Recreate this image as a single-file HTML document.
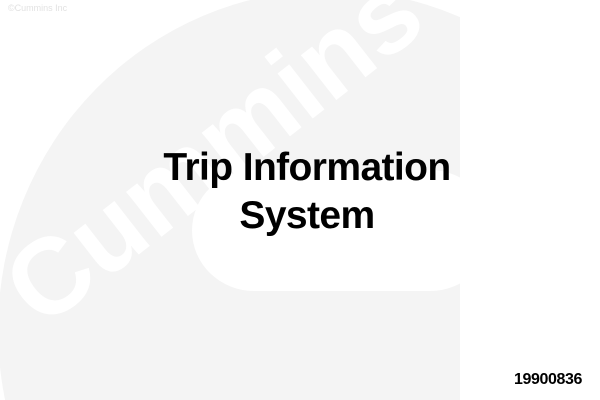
<!DOCTYPE html>
<html><head><style>
html,body{margin:0;width:600px;height:400px;overflow:hidden}
body{background:#fff;position:relative;font-family:"Liberation Sans",sans-serif}
.t{position:absolute;left:0;width:600px;text-align:center;font-weight:bold;font-size:39px;color:#000;letter-spacing:-0.6px;padding-left:14px;box-sizing:border-box;line-height:1}
</style></head><body>
<svg width="600" height="400" style="position:absolute;left:0;top:0">
<defs><clipPath id="c"><rect x="0" y="0" width="460" height="400"/></clipPath></defs>
<g clip-path="url(#c)">
<ellipse cx="330" cy="330" rx="332" ry="340" fill="#f4f4f4"/>
<rect x="192" y="170" width="300" height="121" rx="62" fill="#fff"/>
</g>
<text x="0" y="0" transform="translate(42,330) rotate(-38)" font-family="Liberation Sans" font-weight="bold" font-size="108" fill="#fff">Cummins</text>
<text x="8" y="11" font-family="Liberation Sans" font-size="9" fill="#e2e2e2">©Cummins Inc</text>
</svg>
<div class="t" style="top:148px">Trip Information</div>
<div class="t" style="top:196px">System</div>
<div style="position:absolute;left:514px;top:371px;font-weight:bold;font-size:16px;letter-spacing:-0.4px">19900836</div>
</body></html>
